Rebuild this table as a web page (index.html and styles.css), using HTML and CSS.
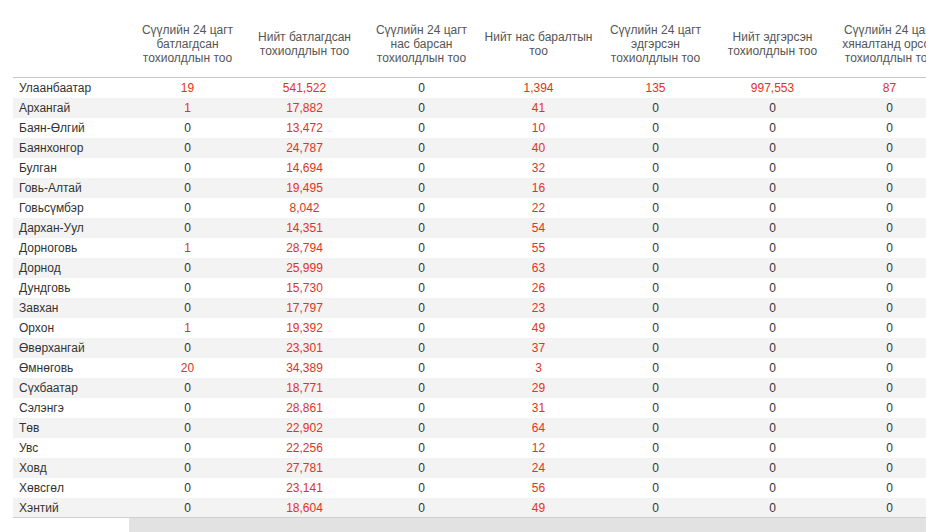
FILE: index.html
```html
<!DOCTYPE html>
<html lang="mn">
<head>
<meta charset="utf-8">
<link rel="stylesheet" href="styles.css">
</head>
<body>
<div class="wrap">
  <div class="viewport">
    <table class="grid">
      <colgroup>
        <col class="c-name"><col class="c-num"><col class="c-num"><col class="c-num"><col class="c-num"><col class="c-num"><col class="c-num"><col class="c-num">
      </colgroup>
      <thead>
        <tr>
          <th></th>
          <th>Сүүлийн 24 цагт батлагдсан тохиолдлын тоо</th>
          <th>Нийт батлагдсан тохиолдлын тоо</th>
          <th>Сүүлийн 24 цагт нас барсан тохиолдлын тоо</th>
          <th>Нийт нас баралтын тоо</th>
          <th>Сүүлийн 24 цагт эдгэрсэн тохиолдлын тоо</th>
          <th>Нийт эдгэрсэн тохиолдлын тоо</th>
          <th>Сүүлийн 24 цагт хяналтанд орсон тохиолдлын тоо</th>
        </tr>
      </thead>
      <tbody>
        <tr><td>Улаанбаатар</td><td class="r">19</td><td class="r">541,522</td><td>0</td><td class="r">1,394</td><td class="r">135</td><td class="r">997,553</td><td class="r">87</td></tr>
        <tr><td>Архангай</td><td class="r">1</td><td class="r">17,882</td><td>0</td><td class="r">41</td><td>0</td><td>0</td><td>0</td></tr>
        <tr><td>Баян-Өлгий</td><td>0</td><td class="r">13,472</td><td>0</td><td class="r">10</td><td>0</td><td>0</td><td>0</td></tr>
        <tr><td>Баянхонгор</td><td>0</td><td class="r">24,787</td><td>0</td><td class="r">40</td><td>0</td><td>0</td><td>0</td></tr>
        <tr><td>Булган</td><td>0</td><td class="r">14,694</td><td>0</td><td class="r">32</td><td>0</td><td>0</td><td>0</td></tr>
        <tr><td>Говь-Алтай</td><td>0</td><td class="r">19,495</td><td>0</td><td class="r">16</td><td>0</td><td>0</td><td>0</td></tr>
        <tr><td>Говьсүмбэр</td><td>0</td><td class="r">8,042</td><td>0</td><td class="r">22</td><td>0</td><td>0</td><td>0</td></tr>
        <tr><td>Дархан-Уул</td><td>0</td><td class="r">14,351</td><td>0</td><td class="r">54</td><td>0</td><td>0</td><td>0</td></tr>
        <tr><td>Дорноговь</td><td class="r">1</td><td class="r">28,794</td><td>0</td><td class="r">55</td><td>0</td><td>0</td><td>0</td></tr>
        <tr><td>Дорнод</td><td>0</td><td class="r">25,999</td><td>0</td><td class="r">63</td><td>0</td><td>0</td><td>0</td></tr>
        <tr><td>Дундговь</td><td>0</td><td class="r">15,730</td><td>0</td><td class="r">26</td><td>0</td><td>0</td><td>0</td></tr>
        <tr><td>Завхан</td><td>0</td><td class="r">17,797</td><td>0</td><td class="r">23</td><td>0</td><td>0</td><td>0</td></tr>
        <tr><td>Орхон</td><td class="r">1</td><td class="r">19,392</td><td>0</td><td class="r">49</td><td>0</td><td>0</td><td>0</td></tr>
        <tr><td>Өвөрхангай</td><td>0</td><td class="r">23,301</td><td>0</td><td class="r">37</td><td>0</td><td>0</td><td>0</td></tr>
        <tr><td>Өмнөговь</td><td class="r">20</td><td class="r">34,389</td><td>0</td><td class="r">3</td><td>0</td><td>0</td><td>0</td></tr>
        <tr><td>Сүхбаатар</td><td>0</td><td class="r">18,771</td><td>0</td><td class="r">29</td><td>0</td><td>0</td><td>0</td></tr>
        <tr><td>Сэлэнгэ</td><td>0</td><td class="r">28,861</td><td>0</td><td class="r">31</td><td>0</td><td>0</td><td>0</td></tr>
        <tr><td>Төв</td><td>0</td><td class="r">22,902</td><td>0</td><td class="r">64</td><td>0</td><td>0</td><td>0</td></tr>
        <tr><td>Увс</td><td>0</td><td class="r">22,256</td><td>0</td><td class="r">12</td><td>0</td><td>0</td><td>0</td></tr>
        <tr><td>Ховд</td><td>0</td><td class="r">27,781</td><td>0</td><td class="r">24</td><td>0</td><td>0</td><td>0</td></tr>
        <tr><td>Хөвсгөл</td><td>0</td><td class="r">23,141</td><td>0</td><td class="r">56</td><td>0</td><td>0</td><td>0</td></tr>
        <tr><td>Хэнтий</td><td>0</td><td class="r">18,604</td><td>0</td><td class="r">49</td><td>0</td><td>0</td><td>0</td></tr>
      </tbody>
    </table>
  </div>
  <div class="scrollrow">
    <div class="scroll-spacer"></div>
    <div class="scrollbar"></div>
  </div>
</div>
</body>
</html>
```

FILE: styles.css
```css
html, body {
  margin: 0;
  padding: 0;
  background: #fff;
}
body {
  font-family: "Liberation Sans", Arial, sans-serif;
  font-size: 12px;
  color: #333;
}
.wrap {
  padding-left: 13px;
  width: 913px;
}
.viewport {
  width: 913px;
  overflow: hidden;
}
.grid {
  border-collapse: collapse;
  table-layout: fixed;
  width: 935px;
}
.c-name { width: 116px; }
.c-num { width: 117px; }
.grid th {
  height: 67px;
  padding: 10px 3px 0;
  font-weight: normal;
  color: #555;
  line-height: 14px;
  text-align: center;
  vertical-align: middle;
  border-bottom: 1px solid #c8c8c8;
}
.grid td {
  height: 20px;
  padding: 0;
  line-height: 20px;
  text-align: center;
  white-space: nowrap;
  color: #333;
}
.grid td:first-child {
  text-align: left;
  padding-left: 6px;
}
.grid tbody tr:nth-child(even) td {
  background: #f3f3f3;
}
.grid td.r {
  color: #e2321c;
}
.scrollrow {
  display: flex;
  border-top: 1px solid #cfcfcf;
  margin-top: -1px;
}
.scroll-spacer {
  width: 116px;
  flex: none;
}
.scrollbar {
  flex: 1;
  height: 15px;
  background: #e2e2e2;
}
```
